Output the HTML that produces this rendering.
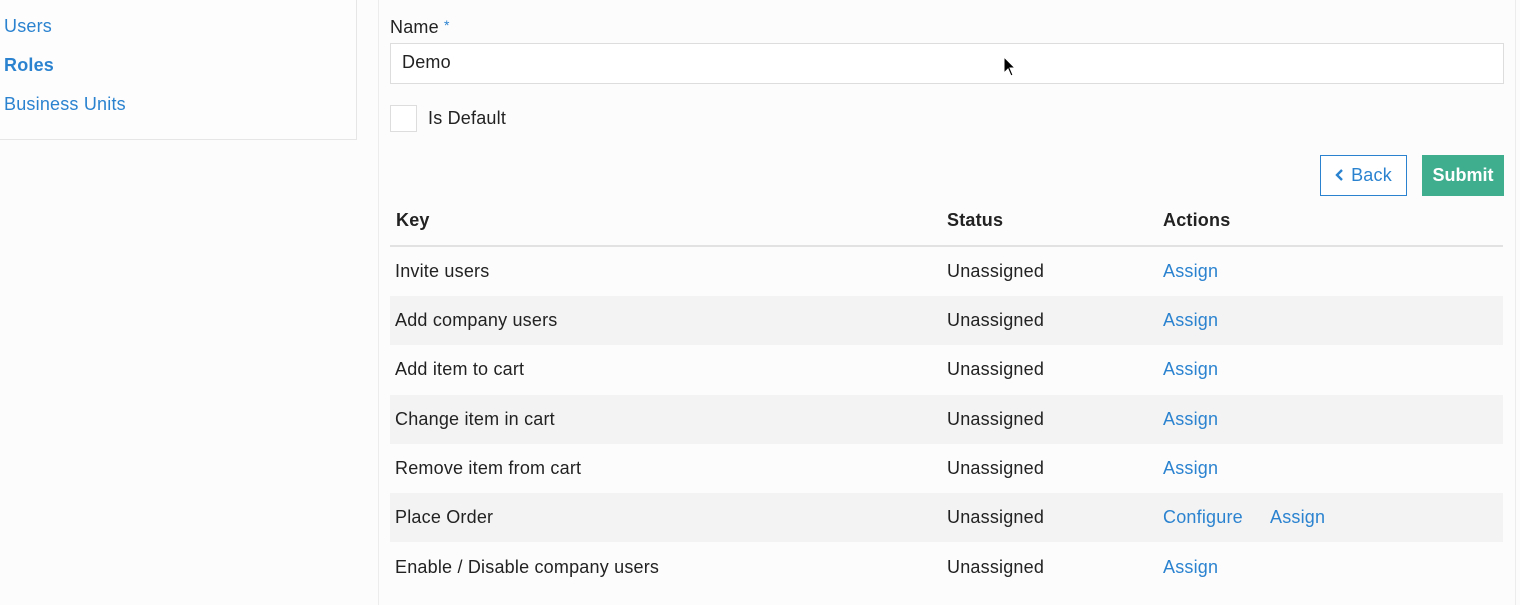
<!DOCTYPE html>
<html><head><style>
body{margin:0;width:1520px;height:605px;background:#fcfcfc;font-family:"Liberation Sans",sans-serif;position:relative;overflow:hidden;color:#222;letter-spacing:0.2px}
.a{position:absolute}
.nav{font-size:18px;color:#2b83d0}
.row{position:absolute;left:390px;width:1113px;height:49px;font-size:18px;color:#222}
.row span{position:absolute;top:14px}
.row.g{background:#f3f3f3}
.lk{color:#2b83d0}
</style></head><body>
<div class="a" style="left:0;top:0;width:356px;height:139px;border-right:1px solid #e6e6e6;border-bottom:1px solid #e6e6e6;background:#fdfdfd"></div>
<div class="a nav" style="left:4px;top:16px">Users</div>
<div class="a nav" style="left:4px;top:55px;font-weight:bold">Roles</div>
<div class="a nav" style="left:4px;top:94px">Business Units</div>
<div class="a" style="left:378px;top:0;width:1px;height:605px;background:#ececec"></div>
<div class="a" style="left:1515px;top:0;width:1px;height:605px;background:#ececec"></div>
<div class="a" style="left:390px;top:17px;font-size:18px">Name <span style="color:#2b83d0;font-size:14px;vertical-align:top">*</span></div>
<div class="a" style="left:390px;top:43px;width:1112px;height:39px;border:1px solid #ddd;background:#fff"></div>
<div class="a" style="left:402px;top:52px;font-size:18px">Demo</div>
<div class="a" style="left:390px;top:105px;width:25px;height:25px;border:1px solid #ddd;background:#fff"></div>
<div class="a" style="left:428px;top:108px;font-size:18px">Is Default</div>
<div class="a" style="left:1320px;top:155px;width:85px;height:39px;border:1px solid #2b83d0;background:#fff;color:#2b83d0;font-size:18px;line-height:39px;text-align:center"><svg width="10" height="14" viewBox="0 0 10 14" style="vertical-align:-1px;margin-right:6px"><path d="M7 2 L2 7 L7 12" fill="none" stroke="#2b83d0" stroke-width="2.4"/></svg>Back</div>
<div class="a" style="left:1422px;top:155px;width:82px;height:41px;background:#3fae8f;color:#fff;font-weight:bold;font-size:18px;line-height:40px;text-align:center;letter-spacing:0">Submit</div>
<div class="a" style="left:396px;top:210px;font-size:18px;font-weight:bold">Key</div>
<div class="a" style="left:947px;top:210px;font-size:18px;font-weight:bold">Status</div>
<div class="a" style="left:1163px;top:210px;font-size:18px;font-weight:bold">Actions</div>
<div class="a" style="left:390px;top:245px;width:1113px;height:2px;background:#e2e2e2"></div>
<div class="row" style="top:247px"><span style="left:5px">Invite users</span><span style="left:557px">Unassigned</span><span class="lk" style="left:773px">Assign</span></div>
<div class="row g" style="top:296px"><span style="left:5px">Add company users</span><span style="left:557px">Unassigned</span><span class="lk" style="left:773px">Assign</span></div>
<div class="row" style="top:345px"><span style="left:5px">Add item to cart</span><span style="left:557px">Unassigned</span><span class="lk" style="left:773px">Assign</span></div>
<div class="row g" style="top:395px"><span style="left:5px">Change item in cart</span><span style="left:557px">Unassigned</span><span class="lk" style="left:773px">Assign</span></div>
<div class="row" style="top:444px"><span style="left:5px">Remove item from cart</span><span style="left:557px">Unassigned</span><span class="lk" style="left:773px">Assign</span></div>
<div class="row g" style="top:493px"><span style="left:5px">Place Order</span><span style="left:557px">Unassigned</span><span class="lk" style="left:773px">Configure</span><span class="lk" style="left:880px">Assign</span></div>
<div class="row" style="top:543px"><span style="left:5px">Enable / Disable company users</span><span style="left:557px">Unassigned</span><span class="lk" style="left:773px">Assign</span></div>
<svg class="a" style="left:1003px;top:56px" width="14" height="22" viewBox="0 0 14 22"><path d="M1 1 L1 17 L5 13 L8 20 L10 19 L7 12 L12 12 Z" fill="#000" stroke="#fff" stroke-width="1"/></svg>
</body></html>
